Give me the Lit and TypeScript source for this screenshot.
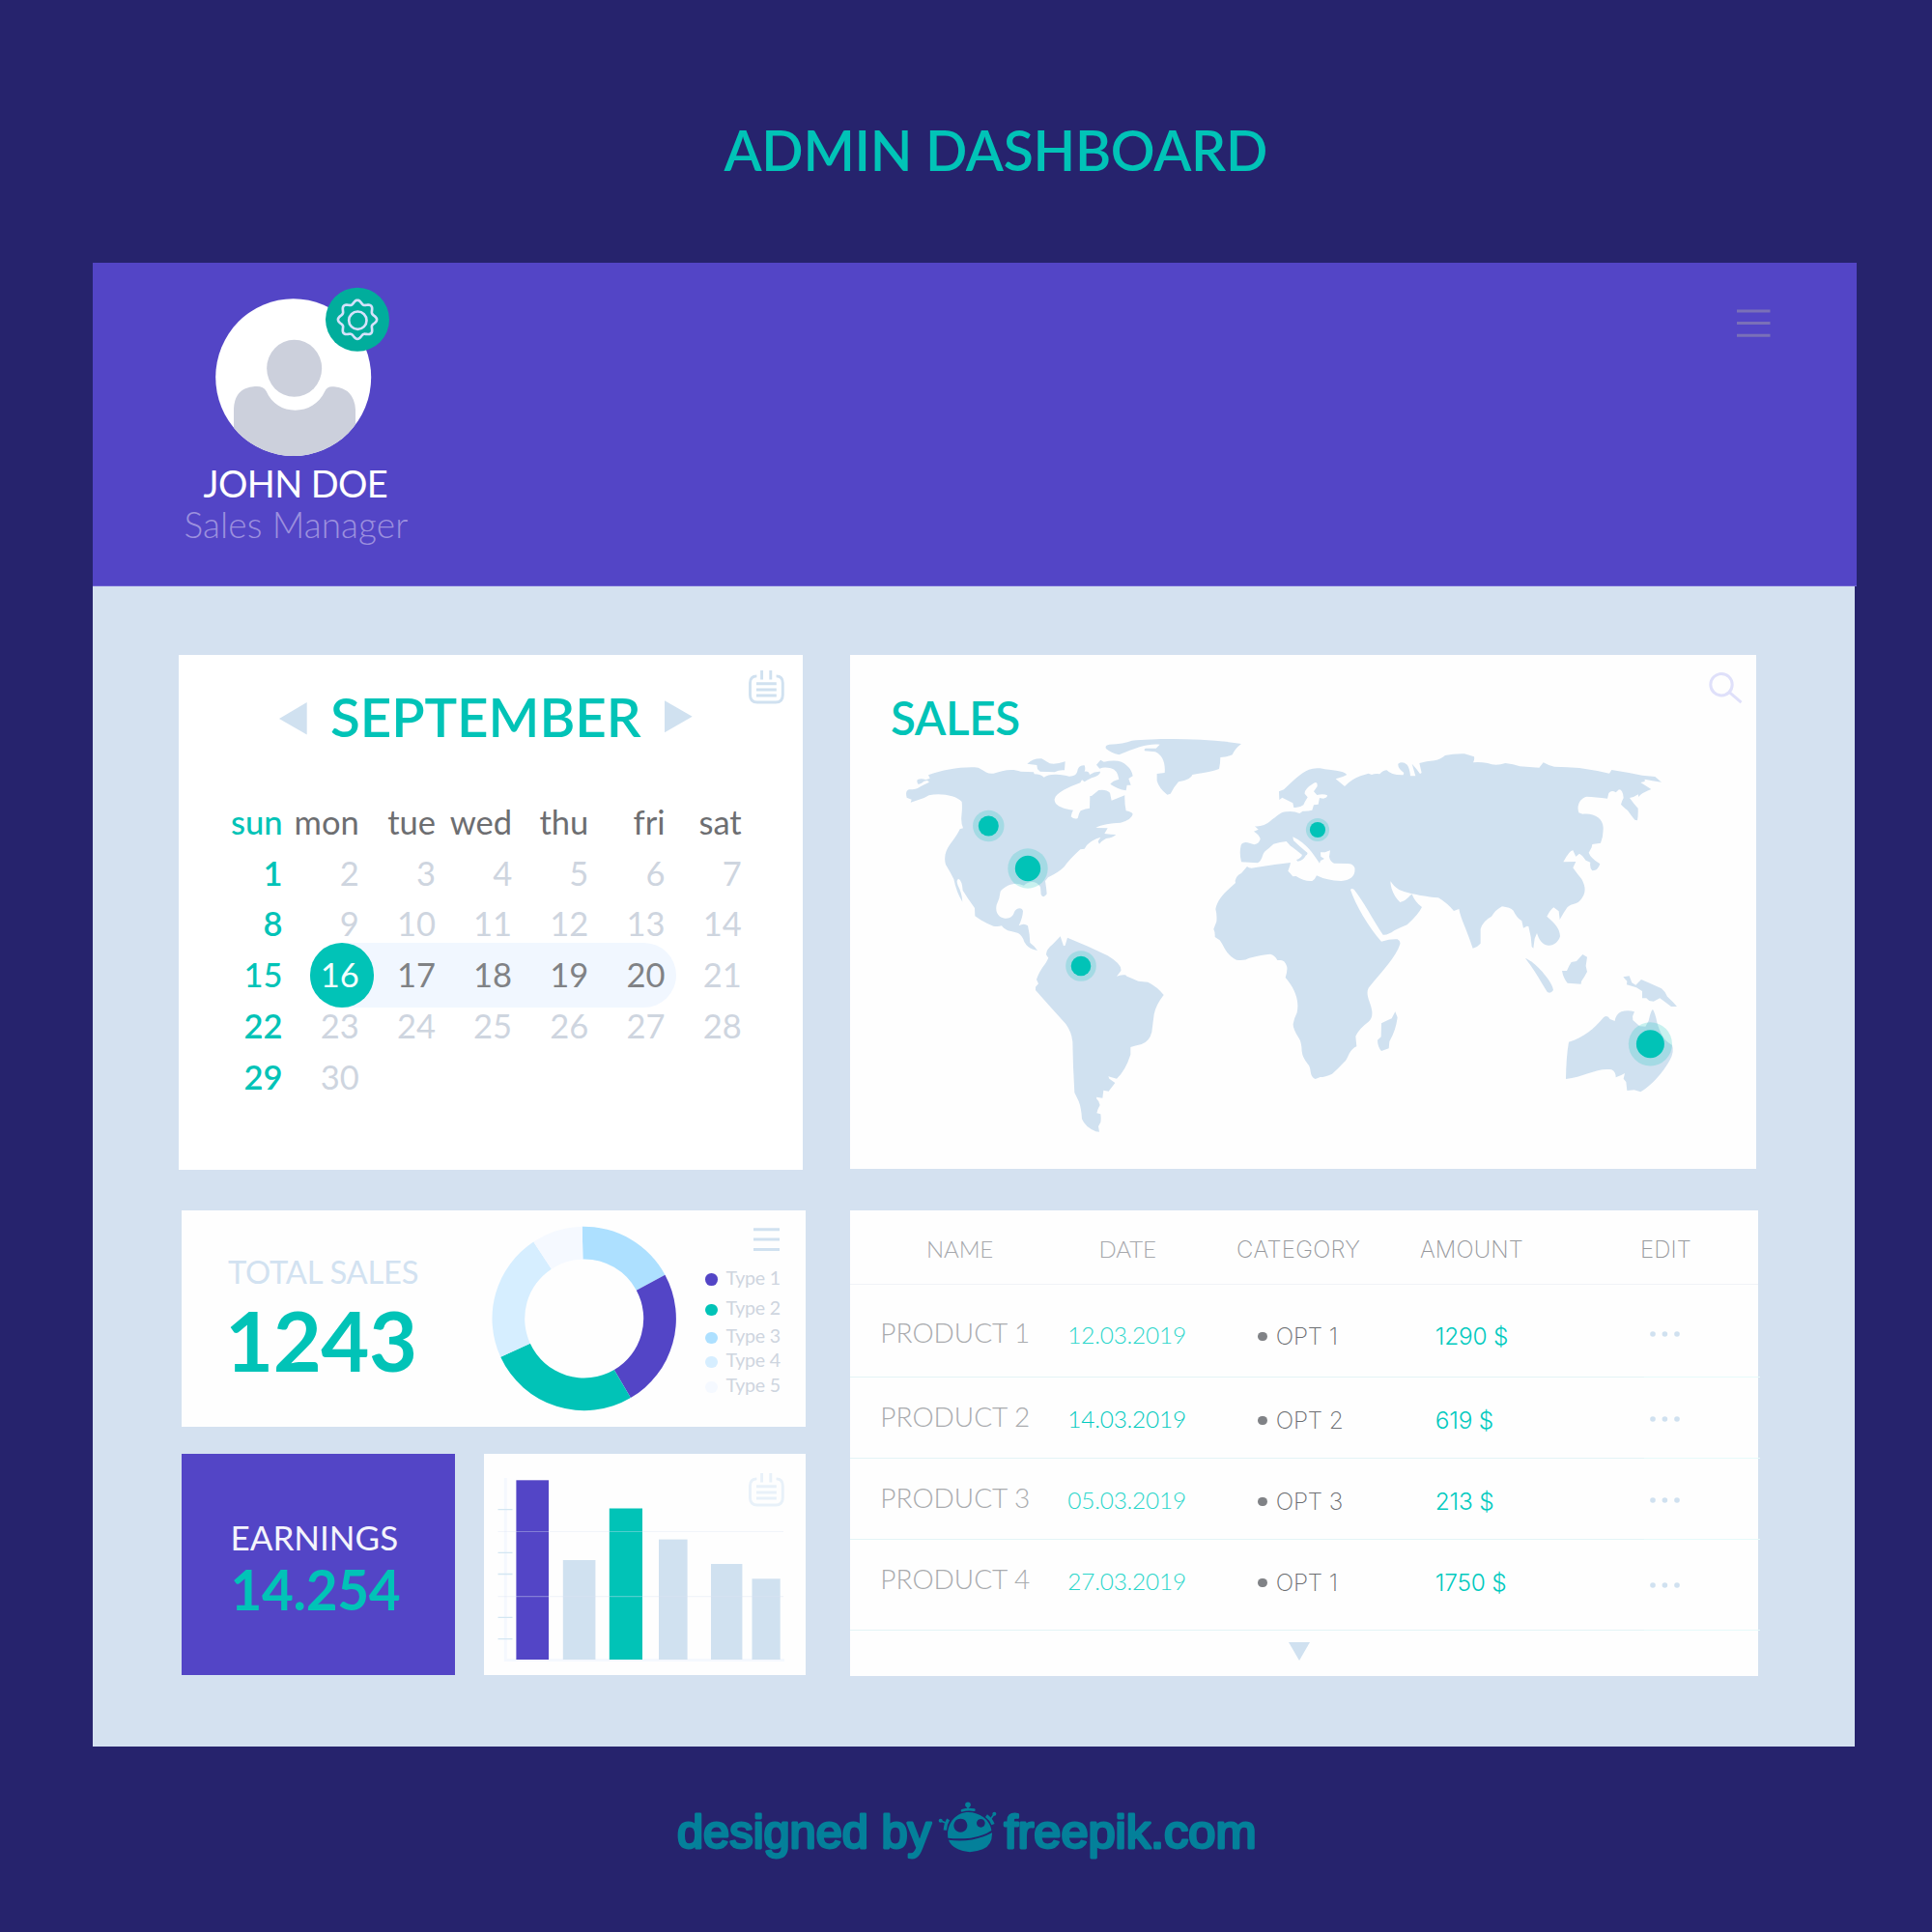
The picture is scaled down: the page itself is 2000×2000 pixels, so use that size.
import { LitElement, html, svg, css } from "lit";
import { customElement } from "lit/decorators.js";
import { classMap } from "lit/directives/class-map.js";

const TEAL = "#01c3b7";
const PURPLE = "#5345c6";
const MIST = "#d0e1f0";

const calendarIcon = (color: string) => html`
  <svg width="37" height="35" viewBox="0 0 37 35" fill="none" stroke=${color} stroke-width="2.9">
    <path d="M8.4 5.9Q1.5 6 1.5 13V25.5Q1.5 33 9 33H28Q35.3 33 35.3 25.5V13Q35.3 6 28.6 5.9" />
    <path d="M13.6 0V9.6M22.8 0V9.6M8 13.8H28.8M8 20H28.8M8 26H28.8" />
  </svg>
`;

const gearPath = () => {
  const pts: string[] = [];
  for (let i = 0; i < 144; i++) {
    const t = (i / 144) * Math.PI * 2;
    const r = 54.6 + 5.6 * Math.cos(8 * t);
    pts.push(`${(120 + r * Math.cos(t)).toFixed(1)},${(122.5 + r * Math.sin(t)).toFixed(1)}`);
  }
  return `M${pts.join("L")}Z`;
};

@customElement("profile-header")
class ProfileHeader extends LitElement {
  static styles = css`
    :host { display: flex; justify-content: space-between; box-sizing: border-box; width: 1826px; height: 335px;
      padding: 24px 89px 0 94px; background: #5345c6; border-bottom: 1px solid #6f63d2; }
    svg { display: block; flex: none; }
    .avatar { margin-left: 30px; }
    .name { margin: 4px 0 0 20.5px; font-size: 38px; line-height: 44px; letter-spacing: -0.6px; color: #fff; }
    .role { margin: -1px 0 0 0.5px; font-size: 37px; line-height: 44px; font-weight: 300; letter-spacing: 0.08px; color: #9c90de; }
    .menu { margin-top: 24px; }
  `;
  render() {
    return html`
      <div>
        <svg class="avatar" width="184" height="178" viewBox="220 296 184 178">
          <defs><clipPath id="face"><ellipse cx="303.7" cy="390.6" rx="80.5" ry="81.4" /></clipPath></defs>
          <ellipse cx="303.7" cy="390.6" rx="80.5" ry="81.4" fill="#fff" />
          <g clip-path="url(#face)">
            <g transform="translate(80 260) scale(.33333)" fill="#ccd0dc">
              <ellipse cx="674" cy="364" rx="85.5" ry="88.5" />
              <path d="M486 640V490Q488 425 552 420Q578 418 587 435C605 475 638 494 677 494C715 494 750 475 769 435Q776 418 797 421Q860 427 864 492V640Z" />
            </g>
          </g>
          <circle cx="370" cy="330.8" r="33" fill="#01ad9c" />
          <g transform="translate(330 290) scale(.33333)" fill="none" stroke="#d5e2fb" stroke-width="8">
            <path d=${gearPath()} />
            <circle cx="121" cy="125" r="27.5" />
          </g>
        </svg>
        <div class="name">JOHN DOE</div>
        <div class="role">Sales Manager</div>
      </div>
      <svg class="menu" width="35" height="30" viewBox="0 0 35 30" stroke="#7a70b8" stroke-width="3">
        <path d="M0 2H34.5M0 14.6H34.5M0 27.3H34.5" />
      </svg>
    `;
  }
}

@customElement("month-calendar")
class MonthCalendar extends LitElement {
  static styles = css`
    :host { display: block; box-sizing: border-box; width: 645.6px; height: 533px; padding-top: 15px; background: #fff; }
    svg { display: block; flex: none; }
    .top { display: flex; align-items: flex-start; height: 82px; padding-left: 104px; }
    .prev { margin-top: 34px; }
    .next { margin-top: 32px; }
    .month { width: 322px; margin: 14px 23.5px 0 24px; font-size: 56.5px; line-height: 68px; font-weight: 600; letter-spacing: -0.1px; color: #01c3b7; }
    .icon { margin: 0.6px 0 0 58.5px; }
    .weeks { margin: 50px 0 0 28.4px; font-size: 34.5px; line-height: 52.7px; }
    .week { display: grid; grid-template-columns: repeat(7, 79.2px); position: relative; text-align: right; color: #ced5df; }
    .week span { position: relative; }
    .head { color: #6d6e71; }
    .week .sun { color: #01c3b7; font-weight: 600; }
    .head .sun, .picked .sun { font-weight: 500; }
    .range { color: #808285; }
    .today { color: #f4fffe; }
    .pill { position: absolute; left: 107.6px; top: -7px; width: 379px; height: 66.6px; border-radius: 34px; background: #f1f7ff; }
    .dot { width: 66.4px; height: 66.4px; border-radius: 50%; background: #01c3b7; }
  `;
  private weeks = [0, 1, 2, 3, 4].map((w) =>
    Array.from({ length: 7 }, (_, d) => w * 7 + d + 1).filter((n) => n <= 30));
  render() {
    return html`
      <div class="top">
        <svg class="prev" width="29" height="34" viewBox="0 0 29 34"><path d="M0 17L28.7 0V33.5Z" fill=${MIST} /></svg>
        <div class="month">SEPTEMBER</div>
        <svg class="next" width="29" height="34" viewBox="0 0 29 34"><path d="M28.7 16.8L0 .3V33.3Z" fill=${MIST} /></svg>
        <div class="icon">${calendarIcon(MIST)}</div>
      </div>
      <div class="weeks">
        <div class="week head">
          ${["sun", "mon", "tue", "wed", "thu", "fri", "sat"].map((d) => html`<span class=${classMap({ sun: d === "sun" })}>${d}</span>`)}
        </div>
        ${this.weeks.map((week) => html`
          <div class=${classMap({ week: true, picked: week[0] === 15 })}>
            ${week[0] === 15 ? html`<div class="pill"><div class="dot"></div></div>` : ""}
            ${week.map((n) => html`<span class=${classMap({ sun: n % 7 === 1, today: n === 16, range: n > 16 && n < 21 })}>${n}</span>`)}
          </div>`)}
      </div>
    `;
  }
}

const AMERICAS = [
  "M128,272L131,263L116,257Q110,235 124,232Q145,232 156,224L167,218L186,209L180,204Q168,205 162,212L152,216Q145,206 150,201Q162,196 175,202L188,197L183,187C230,170 290,160 338,164C355,172 365,185 385,182C410,175 440,165 470,176L510,178L512,184Q530,184 542,194Q555,184 580,185Q605,186 620,191Q640,192 645,178Q648,155 668,157Q672,168 668,176Q682,174 684,186Q700,175 717,176Q718,188 690,196Q675,203 668,208L660,202L655,211C620,225 580,240 575,262C574,285 610,292 633,296Q628,302 626,316Q636,326 647,321Q650,305 656,298Q672,290 684,290L685,252L690,252L712,234Q735,230 747,242L752,266L793,250Q792,275 797,298Q812,300 818,308Q815,325 780,335C750,337 720,340 703,351L740,352L730,369Q750,372 766,372Q755,382 735,384Q720,392 714,401L710,393L718,380Q690,388 675,405L668,416L655,418Q620,450 605,472Q590,488 555,505L546,516Q550,540 551,556Q541,572 533,558L531,535C520,515 495,515 480,530C465,525 455,522 445,526C425,530 415,540 407,548Q405,570 395,590Q390,615 405,626C425,638 445,632 450,612C455,600 475,595 477,610Q476,630 464,655Q480,645 492,655Q498,680 499,708L512,719L522,732L508,728Q490,722 481,705Q475,685 462,678Q440,672 430,670Q415,662 411,655Q400,658 385,656Q355,645 328,625L327,600Q305,570 290,545Q288,515 277,509Q268,512 275,530Q288,555 289,581Q270,550 262,510Q252,490 237,465C230,440 238,420 250,403Q275,370 281,355L291,352Q284,335 286,315Q289,290 287,270C270,250 220,242 185,250Q170,260 150,265Z",
  "M490,152Q510,134 535,136Q550,145 560,151Q580,155 608,145L606,172Q590,170 575,178L530,176L522,168L520,156Z",
  "M705,155L718,140L728,146Q780,135 800,158Q815,170 818,190L805,198L812,218L800,218L797,235Q770,230 748,215Q755,205 775,200Q770,170 750,166Q730,160 715,167Z",
  "M735,105Q730,95 745,92Q790,90 815,80C900,72 1050,72 1155,90Q1135,105 1127,124Q1115,130 1090,132Q1090,150 1086,168Q1070,175 1003,186Q1000,200 960,208Q945,225 935,245L925,248Q900,230 893,205L893,183L917,180C920,150 910,125 888,115L855,112Q852,106 858,104Q875,104 890,104L902,92C870,88 830,100 775,124Q750,118 735,105Z",
  "M593,688L603,718L608,716L615,692Q680,718 740,748Q785,775 781,795L768,812Q780,806 795,808L800,812Q820,820 835,827L865,830Q895,845 914,870Q890,900 884,930Q880,960 877,985Q870,1015 845,1023Q825,1028 811,1032L811,1055Q795,1105 768,1130L742,1123L745,1130L763,1143Q750,1160 743,1169L727,1166L724,1190L705,1187L706,1193Q715,1200 716,1212Q708,1225 706,1237L718,1240Q720,1255 718,1265L711,1278L714,1295L703,1294Q670,1280 660,1255Q658,1220 650,1200L637,1173Q632,1090 631,1015Q628,985 610,960Q560,905 516,855L516,845L525,835L519,822Q525,800 548,770L556,755L549,745Q548,730 570,712Z",
];

const OLD_WORLD = [
  "M165,457Q158,430 164,405Q170,394 185,397L205,403Q222,400 224,385Q220,372 204,362L218,356L207,346Q235,348 255,330C275,315 290,300 305,301Q325,297 346,306L356,299Q370,300 385,296L390,280L404,278L408,258L420,260Q432,258 432,250Q420,244 400,249L390,238L401,222Q402,205 390,212Q360,230 362,245L371,256Q362,270 358,280Q345,290 328,288L325,274L292,257L283,264L282,238L297,232C320,210 350,180 375,170Q390,164 410,166Q440,172 460,173Q485,176 493,186Q480,194 458,199L486,222Q510,198 535,190L560,182L570,186Q580,182 595,184Q605,172 617,172Q630,188 668,187L670,180Q650,165 652,152Q665,142 680,155Q688,165 690,190L706,190L695,152Q710,168 720,183L725,180L718,150Q740,144 765,142Q785,138 798,126Q825,120 858,121L888,130Q890,140 885,148Q905,146 930,150Q955,160 985,150Q1010,152 1030,160Q1060,162 1090,164L1103,148Q1120,158 1137,161Q1180,162 1215,165Q1265,172 1308,182L1315,171Q1360,178 1410,188L1450,192L1470,209Q1440,205 1418,200L1418,207L1405,210L1438,231Q1415,240 1405,248L1398,255L1398,247Q1385,256 1371,258Q1385,278 1397,290Q1398,310 1395,328L1387,326Q1375,312 1365,297Q1350,285 1344,278Q1348,265 1352,258Q1350,232 1338,232L1328,241Q1315,232 1306,243L1302,260Q1265,255 1238,254C1218,258 1205,280 1213,304L1225,308C1260,304 1288,320 1289,350Q1290,375 1281,398L1255,402L1253,412L1244,428Q1250,445 1279,463Q1272,485 1255,484Q1246,475 1249,458L1235,452L1224,438L1215,431L1204,440L1195,421Q1185,420 1165,457L1204,456L1195,475Q1205,490 1222,510Q1238,540 1228,560Q1218,580 1205,585Q1185,590 1178,597Q1165,615 1154,636L1151,610L1135,598Q1125,605 1114,626C1140,648 1155,665 1155,688C1150,705 1135,718 1118,716C1100,714 1090,700 1083,678L1076,695L1072,725L1067,720Q1066,690 1057,657L1052,656L1041,662L1036,640Q1020,630 1010,608Q1000,598 975,595Q955,605 942,626Q915,640 908,665L908,710Q898,722 884,725Q872,690 860,660Q845,625 841,603L825,609Q805,585 777,568C740,566 710,558 695,556Q670,550 655,543Q635,530 629,517Q627,522 632,540Q640,565 658,582Q675,578 690,560L695,557Q705,582 726,597Q715,620 680,652Q655,662 640,670Q620,685 605,683C570,630 545,580 515,542Q507,538 504,543C520,590 560,660 600,704Q630,695 650,697Q660,702 658,712C645,755 590,810 560,848C550,870 565,890 570,915Q575,940 560,953Q530,975 520,998L523,1030Q510,1035 500,1052Q490,1075 485,1078Q465,1100 447,1115Q425,1125 410,1125L395,1131Q382,1127 380,1108Q378,1090 372,1085Q355,1065 353,1045Q352,1015 343,1003Q325,975 326,960Q330,940 338,925C345,890 335,855 302,816Q310,790 306,780Q300,762 288,762L277,762Q268,745 255,743Q230,745 190,755Q175,765 150,761C120,750 110,715 98,700L83,690Q84,675 79,665L88,642Q90,620 85,603C92,570 115,550 147,522L146,515Q150,498 165,492L183,471Q190,478 205,475Q260,465 318,459L316,468L310,485Q318,492 325,502L335,501Q360,518 385,516Q395,510 399,499Q430,515 475,516C510,514 520,495 517,475Q512,462 495,462L453,461Q440,455 438,440L441,421L425,427L411,427L412,440L423,447L411,453L408,461C390,435 370,400 325,379L327,390Q345,408 370,428Q372,434 365,437Q358,452 340,455L336,450Q350,446 354,435Q330,415 318,407L305,393Q285,395 265,401L250,415Q235,425 232,435Q225,458 215,460Z",
  "M643,922L650,940Q645,980 625,1015L623,1036L600,1044Q588,1030 588,1010L599,1000L600,958Q620,948 632,943Z",
  "M1047,756C1075,765 1130,825 1134,855Q1125,868 1115,860C1095,830 1075,790 1047,756Z",
  "M1225,744L1239,752L1235,780L1239,798L1231,812L1221,828L1220,836L1178,833Q1165,818 1161,795L1176,795Q1182,780 1190,768L1206,765Z",
  "M1351,814L1370,811L1378,832L1390,839L1407,822Q1440,836 1470,850Q1482,860 1488,875Q1505,890 1518,906L1500,906Q1485,895 1465,880L1445,890L1432,888L1423,880L1410,880L1410,858L1392,847L1362,838L1363,827Z",
  "M1182,1016C1230,1002 1260,975 1290,940Q1302,930 1310,945L1325,951Q1328,930 1345,922Q1365,916 1386,922Q1378,935 1381,948L1402,967L1420,968L1430,950Q1438,915 1443,915Q1450,925 1456,955C1465,985 1475,1010 1503,1026Q1510,1045 1497,1070C1475,1110 1440,1150 1405,1171L1385,1165L1363,1167L1360,1140L1352,1130L1356,1113Q1345,1120 1328,1126Q1328,1108 1315,1102C1270,1095 1230,1125 1173,1131Q1174,1060 1182,1016Z",
];

const PINS = [
  [1023.3, 855, 10.5, 16.2],
  [1064, 899, 13.2, 20.7],
  [1119, 1000, 10.3, 15.8],
  [1364, 859, 8.1, 12.1],
  [1708.4, 1080.8, 14.5, 22.6],
];

@customElement("sales-map")
class SalesMap extends LitElement {
  static styles = css`
    :host { display: block; box-sizing: border-box; width: 938px; height: 531.5px; padding-top: 18px; background: #fefefe; }
    svg { display: block; flex: none; }
    .top { display: flex; justify-content: space-between; align-items: flex-start; height: 64px; padding: 0 14px 0 42px; }
    .title { margin-top: 25px; font-size: 47.5px; line-height: 44px; font-weight: 600; letter-spacing: -0.4px; color: #01c3b7; }
  `;
  render() {
    return html`
      <div class="top">
        <div class="title">SALES</div>
        <svg width="35" height="33" viewBox="1769 696 35 33" fill="none" stroke="#dfe0fa" stroke-width="3">
          <circle cx="1782" cy="708.7" r="11.2" />
          <path d="M1790.3 716.7L1802.5 727.2" />
        </svg>
      </div>
      <svg width="938" height="440" viewBox="880 760 938 440">
        <g fill=${MIST}>
          <g transform="translate(900 740) scale(.33333)">${AMERICAS.map((d) => svg`<path d=${d} />`)}</g>
          <g transform="translate(1230 740) scale(.33333)">${OLD_WORLD.map((d) => svg`<path d=${d} />`)}</g>
        </g>
        ${PINS.map(([x, y, r, halo]) => svg`
          <circle cx=${x} cy=${y} r=${halo} fill=${TEAL} fill-opacity=".21" />
          <circle cx=${x} cy=${y} r=${r} fill=${TEAL} />`)}
      </svg>
    `;
  }
}

const SLICES = [
  { to: 61.6, color: "#ade0ff" },
  { to: 149.6, color: PURPLE },
  { to: 245.3, color: TEAL },
  { to: 326.6, color: "#d6eeff" },
  { to: 358.8, color: "#f5f9ff" },
];

const slicePath = (from: number, to: number) => {
  const at = (deg: number, r: number) => {
    const a = (deg * Math.PI) / 180;
    return `${(604.7 + r * Math.sin(a)).toFixed(2)} ${(1365 - r * Math.cos(a)).toFixed(2)}`;
  };
  return `M${at(from, 95.2)}A95.2 95.2 0 0 1 ${at(to, 95.2)}L${at(to, 61.5)}A61.5 61.5 0 0 0 ${at(from, 61.5)}Z`;
};

const LEGEND = [
  { label: "Type 1", color: PURPLE, gap: 15.5 },
  { label: "Type 2", color: TEAL, gap: 7.7 },
  { label: "Type 3", color: "#ade0ff", gap: 5 },
  { label: "Type 4", color: "#d6eeff", gap: 0.9 },
  { label: "Type 5", color: "#f5f9ff", gap: 2.1 },
];

@customElement("total-sales")
class TotalSales extends LitElement {
  static styles = css`
    :host { display: flex; align-items: flex-start; width: 646px; height: 223.6px; background: #fefefe; }
    svg { display: block; flex: none; }
    .figures { width: 273px; padding: 43.5px 0 0 48px; white-space: nowrap; }
    .label { font-size: 32.7px; line-height: 40px; letter-spacing: -0.2px; color: #d2e2f1; }
    .value { margin: 5px 0 0 -3px; font-size: 86.5px; line-height: 90px; font-weight: 700; letter-spacing: -0.5px; color: #01c3b7; }
    .donut { margin-top: 16px; }
    .legend { padding: 18px 0 0 29px; }
    .menu { margin-left: 50px; }
    .item { display: flex; align-items: center; font-size: 19.6px; line-height: 24px; letter-spacing: -0.25px; color: #ced5df; }
    .bullet { width: 12.6px; height: 12.6px; margin: 3.6px 9px 0 0; border-radius: 50%; }
  `;
  render() {
    return html`
      <div class="figures">
        <div class="label">TOTAL SALES</div>
        <div class="value">1243</div>
      </div>
      <svg class="donut" width="192" height="192" viewBox="509 1269 192 192">
        ${SLICES.map((s, i) => svg`<path d=${slicePath(i ? SLICES[i - 1].to : -1.2, s.to)} fill=${s.color} />`)}
      </svg>
      <div class="legend">
        <svg class="menu" width="28" height="24" viewBox="0 0 28 24" stroke=${MIST} stroke-width="3">
          <path d="M0 1.8H27M0 12.1H27M0 22.4H27" />
        </svg>
        ${LEGEND.map((l) => html`
          <div class="item" style="margin-top:${l.gap}px">
            <span class="bullet" style="background:${l.color}"></span>${l.label}
          </div>`)}
      </div>
    `;
  }
}

@customElement("earnings-card")
class EarningsCard extends LitElement {
  static styles = css`
    :host { display: block; box-sizing: border-box; width: 282.6px; height: 229.4px; padding: 65px 0 0 50.5px; background: #5345c6; }
    .label { font-size: 35px; line-height: 42px; color: #f3f4fc; }
    .value { margin-top: 3px; font-size: 56.7px; line-height: 60px; font-weight: 700; letter-spacing: -0.35px; color: #01c3b7; }
  `;
  render() {
    return html`<div class="label">EARNINGS</div><div class="value">14.254</div>`;
  }
}

const BARS = [
  [534.4, 33.6, 1532.3, PURPLE],
  [582.8, 33.6, 1615, MIST],
  [630.8, 34.2, 1561.5, TEAL],
  [682, 29.6, 1593.6, MIST],
  [736, 32.4, 1619, MIST],
  [778.5, 29.2, 1634.3, MIST],
] as const;

@customElement("bar-card")
class BarCard extends LitElement {
  static styles = css`
    :host { display: block; position: relative; width: 332.6px; height: 229.4px; background: #fefefe; }
    svg { display: block; }
    .icon { position: absolute; left: 274px; top: 20px; }
  `;
  render() {
    return html`
      <svg width="333" height="229" viewBox="501 1505 333 229">
        <path d="M523.3 1530V1718.5H812" fill="none" stroke="#f5f8fe" stroke-width="3" />
        ${BARS.map(([x, w, y, color]) => svg`<rect x=${x} y=${y} width=${w} height=${1718 - y} fill=${color} />`)}
        <path d="M515.5 1562.7H530.5M515.5 1607.4H530.5M515.5 1629.5H530.5M515.5 1674.4H530.5M515.5 1696.6H530.5" stroke="#d3e6f2" stroke-width="1.3" />
        <path d="M515.5 1585.5H811M515.5 1652.6H811" stroke="#dbe3f5" stroke-opacity=".36" stroke-width="1.1" />
      </svg>
      <div class="icon">${calendarIcon("#e8f1f9")}</div>
    `;
  }
}

const ROWS = [
  { name: "PRODUCT 1", date: "12.03.2019", opt: "OPT 1", amount: "1290 $" },
  { name: "PRODUCT 2", date: "14.03.2019", opt: "OPT 2", amount: "619 $" },
  { name: "PRODUCT 3", date: "05.03.2019", opt: "OPT 3", amount: "213 $" },
  { name: "PRODUCT 4", date: "27.03.2019", opt: "OPT 1", amount: "1750 $" },
];

@customElement("product-table")
class ProductTable extends LitElement {
  static styles = css`
    :host { display: block; width: 940px; height: 482px; background: #fefefe; }
    svg { display: block; }
    .head, .row { display: grid; align-items: start; box-sizing: border-box; white-space: nowrap; font-weight: 300; }
    .head { grid-template-columns: 178.5px 142.5px 190px 228px auto; height: 77px; padding: 24.5px 0 0 79px;
      border-bottom: 1px solid #f0f3f7; font-size: 24px; line-height: 30px; letter-spacing: -0.1px; color: #a6a8ac; }
    .thin { font-family: Inter, "Lato", sans-serif; font-weight: 200; }
    .head .thin { margin-top: 1.2px; letter-spacing: 0.3px; color: #96989c; }
    .head .thin:nth-child(n + 4) { letter-spacing: 0.1px; }
    .row { grid-template-columns: 194px 197px 183.5px 222.5px auto; width: 942px; height: 84px; padding-left: 31.3px;
      background: linear-gradient(90deg, #e3f4f6 0 822px, #e6fafa 822px) left bottom / 100% 1px no-repeat; }
    .r0 { height: 96px; padding-top: 9px; }
    .r3 { height: 94px; }
    .name { margin-top: 22px; font-size: 28px; line-height: 36px; color: #a9abae; }
    .date { margin-top: 27.8px; font-size: 24.4px; line-height: 30px; letter-spacing: -0.2px; color: #2bd6cb; }
    .r1 .date { color: #01cabf; }
    .opt, .amount { margin-top: 28.7px; font-size: 24.4px; line-height: 30px; }
    .opt { display: flex; align-items: center; letter-spacing: -0.15px; color: #6c6e72; }
    .opt i { width: 9.4px; height: 9.4px; margin: 1.4px 9px 0 0; border-radius: 50%; background: #808286; }
    .amount { font-weight: 300; letter-spacing: -0.2px; color: #01cabf; }
    .edit { margin-top: 40px; }
    .r0 .edit { margin-top: 39px; }
    .r3 .edit { margin-top: 44px; }
    .more { padding: 12.3px 0 0 454.3px; }
  `;
  render() {
    return html`
      <div class="head">
        <span>NAME</span><span>DATE</span><span class="thin">CATEGORY</span><span class="thin">AMOUNT</span><span class="thin">EDIT</span>
      </div>
      ${ROWS.map((r, i) => html`
        <div class="row r${i}">
          <span class="name">${r.name}</span>
          <span class="date">${r.date}</span>
          <span class="opt thin"><i></i>${r.opt}</span>
          <span class="amount thin">${r.amount}</span>
          <svg class="edit" width="31" height="6" viewBox="0 0 31 6" fill=${MIST}>
            <circle cx="3" cy="3" r="2.8" /><circle cx="15.4" cy="3" r="2.8" /><circle cx="28" cy="3" r="2.8" />
          </svg>
        </div>`)}
      <div class="more">
        <svg width="22" height="20" viewBox="0 0 22 20"><path d="M0 0H22L11 19Z" fill=${MIST} /></svg>
      </div>
    `;
  }
}

@customElement("credit-line")
class CreditLine extends LitElement {
  static styles = css`
    :host { display: block; }
    svg { display: block; }
    text { font-family: "Liberation Sans", Arial, sans-serif; font-size: 47.5px; stroke-width: 2.8px; stroke-linejoin: round; stroke: #04809a; }
  `;
  render() {
    return html`
      <svg width="620" height="80" viewBox="690 1855 620 80" fill="#04809a">
        <text x="701" y="1912.6" textLength="263" lengthAdjust="spacingAndGlyphs">designed by</text>
        <text x="1039.5" y="1912.6" textLength="261" lengthAdjust="spacingAndGlyphs">freepik.com</text>
        <g transform="translate(960 1860) scale(.33333)" stroke="#04809a" stroke-linecap="round">
          <path stroke="none" fill-rule="evenodd" d="M64 128C58 85 88 48 127 48C165 48 196 75 199 105Q172 123 135 128Q95 131 64 128ZM103 68a21 21 0 1 0 .1 0ZM166 69a13 13 0 1 0 .1 0Z" />
          <path stroke="none" d="M66 134Q140 144 201 112Q202 150 172 163Q130 180 95 163Q70 150 66 134Z" />
          <circle cx="126" cy="25" r="8.5" stroke="none" />
          <circle cx="41" cy="74" r="6" stroke="none" />
          <circle cx="208" cy="53" r="6" stroke="none" />
          <path d="M126 30V40M41 74L56 81M208 53L197 68" stroke-width="5" />
          <path d="M108 43Q126 37 145 41" stroke-width="8" fill="none" />
          <path d="M65 70Q56 84 55 104M183 59Q198 70 204 86" stroke-width="10" stroke-linecap="butt" fill="none" />
        </g>
      </svg>
    `;
  }
}

@customElement("app-root")
export class AppRoot extends LitElement {
  static styles = css`
    :host { display: block; box-sizing: border-box; width: 2000px; height: 2000px; overflow: hidden; padding: 121px 0 0 96px;
      background: #26236d; font-family: Lato, "Open Sans", sans-serif; }
    .title { margin: 0 0 83px; padding-left: 653.5px; font-size: 57px; line-height: 68px; font-weight: 600; letter-spacing: -0.3px; color: #01c3b7; }
    .board { display: grid; grid-template-columns: 649px 940px; grid-template-rows: 533px 482px; gap: 42px 46px;
      box-sizing: border-box; width: 1824px; height: 1200.5px; padding: 71px 0 0 89px; background: #d4e1f0; }
    .stack { display: flex; flex-direction: column; gap: 28px; padding-left: 3px; }
    .pair { display: flex; gap: 30.4px; }
    .credit { margin: 47.5px 0 0 594px; }
  `;
  render() {
    return html`
      <h1 class="title">ADMIN DASHBOARD</h1>
      <profile-header></profile-header>
      <div class="board">
        <month-calendar></month-calendar>
        <sales-map></sales-map>
        <div class="stack">
          <total-sales></total-sales>
          <div class="pair"><earnings-card></earnings-card><bar-card></bar-card></div>
        </div>
        <product-table></product-table>
      </div>
      <credit-line class="credit"></credit-line>
    `;
  }
}
